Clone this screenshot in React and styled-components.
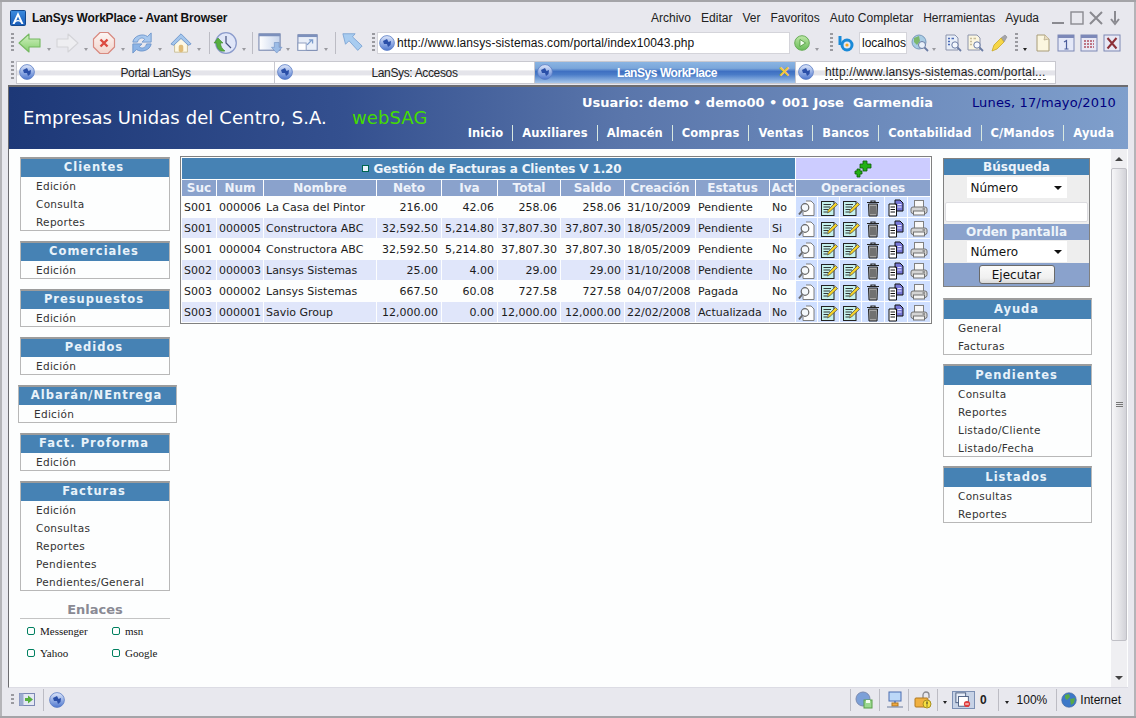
import React from "react";
import styled, { createGlobalStyle } from "styled-components";

const Global = createGlobalStyle`
  html, body { margin: 0; padding: 0; height: 100%; overflow: hidden; }
  #root { height: 100%; }
`;

const Win = styled.div`
  width: 1136px;
  height: 718px;
  box-sizing: border-box;
  display: flex;
  flex-direction: column;
  background: #e8e8ee;
  border-top: 2px solid #a4a4a8;
  border-bottom: 2px solid #a4a4a8;
  box-shadow: inset 2px 0 #b4b4b8, inset -2px 0 #b4b4b8;
  font-family: "Liberation Sans", Arial, sans-serif;
  font-size: 12px;
  color: #111;
`;

const TitleBar = styled.div`
  height: 28px;
  flex: none;
  display: flex;
  align-items: center;
  padding: 3px 13px 0 10px;
  box-sizing: border-box;
`;

const AppLogo = styled.span`
  width: 16px;
  height: 16px;
  margin-right: 6px;
  display: block;
`;

const AppTitle = styled.span`
  font-weight: bold;
  font-size: 12px;
  letter-spacing: -0.2px;
  flex: 1;
  color: #111;
`;

const Menu = styled.nav`
  display: flex;
  gap: 10px;
  margin-right: 11px;
  color: #222;
`;

const WinButtons = styled.div`
  display: flex;
  align-items: center;
  gap: 3px;
`;

const ToolBar = styled.div`
  height: 25px;
  flex: none;
  display: flex;
  align-items: center;
  padding-left: 11px;
`;

const Grip = styled.span`
  width: 3px;
  height: ${(p) => p.$h || 20}px;
  margin: 0 ${(p) => p.$r ?? 4}px 0 ${(p) => p.$l ?? 0}px;
  flex: none;
  background: repeating-linear-gradient(#9a9aa0 0 2px, transparent 2px 4px);
`;

const Sep = styled.span`
  width: 1px;
  height: 22px;
  flex: none;
  margin: 0 ${(p) => p.$r ?? 3}px 0 ${(p) => p.$l ?? 5}px;
  background: #bcbcc4;
`;

const Drop = styled.span`
  width: 0;
  height: 0;
  flex: none;
  align-self: flex-end;
  margin: 0 ${(p) => p.$r ?? 4}px ${(p) => p.$b ?? 4}px ${(p) => p.$l ?? 5}px;
  border-left: 2.5px solid transparent;
  border-right: 2.5px solid transparent;
  border-top: 3px solid ${(p) => (p.$dark ? "#222" : "#9a9aa0")};
`;

const Tool = styled.span`
  display: block;
  flex: none;
  width: ${(p) => p.$s || 24}px;
  height: ${(p) => p.$s || 24}px;
  margin-right: ${(p) => p.$r || 0}px;
  & > svg { display: block; width: 100%; height: 100%; }
`;

const AddressBox = styled.div`
  width: 413px;
  height: 22px;
  flex: none;
  box-sizing: border-box;
  background: #fff;
  border: 1px solid #d4d4da;
  display: flex;
  align-items: center;
  gap: 2px;
  padding-left: 1px;
  font-size: 12px;
  letter-spacing: 0.1px;
  margin-right: 4px;
`;

const SearchBox = styled.div`
  width: 48px;
  height: 22px;
  flex: none;
  box-sizing: border-box;
  background: #fff;
  border: 1px solid #d4d4da;
  display: flex;
  align-items: center;
  padding-left: 2px;
  margin: 0 4px 0 4px;
  overflow: hidden;
`;

const TabStrip = styled.div`
  height: 30px;
  flex: none;
  display: flex;
  align-items: flex-start;
  padding: 6px 0 0 11px;
  box-sizing: border-box;
`;

const Tabs = styled.div`
  display: flex;
  border: 1px solid #c8c8cf;
`;

const Tab = styled.div`
  position: relative;
  width: ${(p) => p.$w || 260}px;
  height: 21px;
  box-sizing: border-box;
  display: flex;
  align-items: center;
  justify-content: ${(p) => (p.$left ? "flex-start" : "center")};
  padding-left: ${(p) => (p.$left ? 0 : 20)}px;
  padding-right: ${(p) => (p.$active ? 16 : 0)}px;
  border-right: 1px solid #c8c8cf;
  color: ${(p) => (p.$active ? "#fff" : "#222")};
  font-weight: ${(p) => (p.$active ? "bold" : "normal")};
  letter-spacing: ${(p) => (p.$active ? "-0.45px" : p.$left ? "0.18px" : "-0.35px")};
  background: ${(p) =>
    p.$active
      ? "linear-gradient(#8ab4e2 0%, #7aa6da 30%, #3f70c2 45%, #4a7cc8 60%, #a6c6ea 100%)"
      : "linear-gradient(#fff 0%, #fff 38%, #e4e4ea 42%, #e4e4ea 62%, #fff 66%, #fff 100%)"};
  &:last-child { border-right: 0; }
`;

const TabGlobe = styled.span`
  position: absolute;
  left: 2px;
  top: 2px;
  width: 16px;
  height: 16px;
`;

const TabClose = styled.span`
  position: absolute;
  right: 4px;
  top: 1px;
  color: #f4c83c;
  font-size: 15px;
  font-weight: bold;
  line-height: 18px;
`;

const DashedText = styled.span`
  margin-left: 29px;
  border-bottom: 1px dashed #555;
  line-height: 14px;
`;

const Viewport = styled.div`
  flex: 1;
  min-height: 0;
  margin: 0 8px;
  display: flex;
  flex-direction: column;
  background: #fdfefe;
  border-top: 2px solid #6c6c70;
  border-left: 1px solid #6c6c70;
  border-bottom: 1px solid #dcdce4;
  font-family: "DejaVu Sans", Verdana, sans-serif;
`;

const Banner = styled.header`
  height: 62px;
  flex: none;
  box-sizing: border-box;
  display: flex;
  justify-content: space-between;
  padding: 0 1px 0 14px;
  color: #fff;
  background: linear-gradient(90deg, #1d3877 0%, #34508f 30%, #5a76ab 55%, #7f9fcc 100%);
`;

const Company = styled.div`
  align-self: flex-start;
  margin-top: 20px;
  font-size: 18px;
  letter-spacing: 0.1px;
  line-height: 22px;
  white-space: nowrap;
`;

const Product = styled.span`
  color: #44dd00;
  margin-left: 25px;
`;

const BannerSide = styled.div`
  display: flex;
  flex-direction: column;
  align-items: flex-end;
`;

const UserRow = styled.div`
  display: flex;
  align-items: baseline;
  margin: 8px 11px 0 0;
  height: 18px;
  white-space: nowrap;
`;

const UserName = styled.span`
  font-weight: bold;
  font-size: 13px;
`;

const DateText = styled.span`
  font-size: 13px;
  letter-spacing: 0.15px;
  color: #00007f;
  margin-left: 39px;
`;

const Nav = styled.nav`
  display: flex;
  margin: 12px 13px 0 0;
  font-size: 11.5px;
  font-weight: bold;
  letter-spacing: 0.1px;
  white-space: nowrap;
`;

const NavItem = styled.a`
  padding: 0 9px;
  line-height: 16px;
  border-left: 1px solid #d8e8e0;
  &:first-child { border-left: 0; }
  &:last-child { padding-right: 0; }
`;

const Body = styled.div`
  flex: 1;
  min-height: 0;
  display: flex;
`;

const Main = styled.main`
  flex: 1;
  min-width: 0;
  display: flex;
  align-items: flex-start;
  padding: 8px 0 0 11px;
`;

const Side = styled.aside`
  width: ${(p) => p.$w}px;
  flex: none;
  display: flex;
  flex-direction: column;
  gap: ${(p) => p.$gap}px;
`;

const Box = styled.section`
  box-sizing: border-box;
  border: 1px solid #b8b8b8;
  border-top: 2px solid #9c9c9c;
  margin: 0 ${(p) => (p.$wide ? "-7px" : 0)} 0 ${(p) => (p.$wide ? "-2px" : 0)};
`;

const BoxHead = styled.h3`
  margin: 0;
  height: ${(p) => (p.$tall ? 19 : 18)}px;
  padding-right: 2px;
  background: #4682b4;
  color: #e8f2fa;
  font-size: 11.5px;
  line-height: ${(p) => (p.$tall ? 18 : 17)}px;
  font-weight: bold;
  letter-spacing: 1px;
  text-align: center;
`;

const BoxItem = styled.div`
  height: 18px;
  line-height: 18px;
  padding-left: ${(p) => (p.$tall ? 14 : 15)}px;
  font-size: 10.5px;
  letter-spacing: 0.3px;
  color: #333;
  &:last-child { height: 17px; }
`;

const LinksBlock = styled.div`
  margin-top: 1px;
`;

const LinksHead = styled.div`
  text-align: center;
  font-weight: bold;
  font-size: 13px;
  color: #8a8a94;
  line-height: 16px;
  border-bottom: 1px solid #c4c4c4;
`;

const Links = styled.div`
  display: grid;
  grid-template-columns: 85px 1fr;
  grid-auto-rows: 22px;
  padding: 1px 0 0 7px;
`;

const LinkItem = styled.div`
  display: flex;
  align-items: center;
  gap: 5px;
  font-family: "Liberation Serif", "Times New Roman", serif;
  font-size: 11px;
  color: #141414;
`;

const LinkDot = styled.i`
  width: 6px;
  height: 6px;
  border: 1px solid #008060;
  border-radius: 2px;
`;

const TableWrap = styled.div`
  width: 752px;
  flex: none;
  margin: -1px 11px 0 10px;
  box-sizing: border-box;
  border: 1px solid #808080;
`;

const Grid = styled.table`
  width: 750px;
  table-layout: fixed;
  border-collapse: separate;
  border-spacing: 1px;
  margin: 0;
  font-size: 11px;
  color: #1c1c1c;
`;

const TitleCell = styled.td`
  height: 21px;
  padding: 0 0 0 6px;
  background: #4682b4;
  color: #eef4fa;
  font-weight: bold;
  font-size: 12px;
  letter-spacing: -0.15px;
  text-align: center;
`;

const TitleDot = styled.i`
  display: inline-block;
  width: 5px;
  height: 5px;
  border: 1px solid #006650;
  background: #e8f2fa;
  margin-right: 5px;
  vertical-align: 1px;
`;

const AddCell = styled.td`
  padding: 0;
  background: #ccccff;
  text-align: center;
  line-height: 0;
`;

const Th = styled.th`
  height: 16px;
  padding: 0;
  background: #8aa2cc;
  color: #eef2fa;
  font-size: 12px;
  font-weight: bold;
  text-align: center;
  overflow: hidden;
  white-space: nowrap;
`;

const Td = styled.td`
  height: 20px;
  padding: 0 3px 0 2px;
  background: ${(p) => (p.$alt ? "#e0e6fa" : "#fdfefe")};
  text-align: ${(p) => (p.$num ? "right" : "left")};
  white-space: nowrap;
  overflow: hidden;
`;

const OpCell = styled.td`
  padding: 0;
  height: 20px;
  background: #cfdfff;
  text-align: center;
  line-height: 0;
  & > svg { width: 18px; height: 18px; margin-top: 2px; }
`;

const SearchPanel = styled.form`
  box-sizing: border-box;
  width: 147px;
  margin: 1px 0 2px 0;
  border: 1px solid #808080;
  display: flex;
  flex-direction: column;
  background: #eee;
`;

const PanelHead = styled.div`
  height: 16px;
  line-height: 16px;
  background: ${(p) => (p.$alt ? "#8aa2cc" : "#4682b4")};
  color: #eef4fa;
  font-size: 12px;
  font-weight: bold;
  text-align: center;
`;

const PanelRow = styled.div`
  height: ${(p) => p.$h}px;
  display: flex;
  justify-content: center;
  align-items: center;
  background: ${(p) => p.$bg || "#eee"};
`;

const FakeSelect = styled.div`
  width: 100px;
  height: 21px;
  box-sizing: border-box;
  background: #fff;
  display: flex;
  align-items: center;
  justify-content: space-between;
  padding: 0 4px;
  font-size: 12px;
  color: #111;
  &::after {
    content: "";
    border-left: 4px solid transparent;
    border-right: 4px solid transparent;
    border-top: 4px solid #111;
    margin-right: 1px;
  }
`;

const TextInput = styled.input`
  width: 143px;
  height: 20px;
  box-sizing: border-box;
  border: 1px solid #dcdce0;
  border-radius: 2px;
  background: #fff;
  padding: 0;
  margin: 0;
`;

const Btn = styled.button`
  width: 76px;
  height: 19px;
  padding: 0;
  border: 1px solid #6a6a6a;
  border-radius: 3px;
  background: linear-gradient(#fafafa, #f0f0f0 70%, #d8d8d8);
  font-family: "DejaVu Sans", Verdana, sans-serif;
  font-size: 12px;
  color: #111;
`;

const Scroll = styled.div`
  width: 16px;
  flex: none;
  margin-right: 1px;
  display: flex;
  flex-direction: column;
  align-items: stretch;
  background: #efeff2;
`;

const ScrollArrow = styled.div`
  height: 19px;
  flex: none;
  display: flex;
  justify-content: center;
  align-items: center;
  &::after {
    content: "";
    border-left: 4px solid transparent;
    border-right: 4px solid transparent;
    border-${(p) => (p.$up ? "bottom" : "top")}: 4px solid #444;
  }
`;

const ScrollThumb = styled.div`
  height: 473px;
  flex: none;
  box-sizing: border-box;
  background: linear-gradient(90deg, #f6f6f8, #e2e2e6 60%, #d2d2d8);
  border: 1px solid #c0c0c6;
  border-radius: 2px;
  display: flex;
  align-items: center;
  justify-content: center;
  &::after {
    content: "";
    width: 7px;
    height: 5px;
    background: repeating-linear-gradient(#777 0 1px, transparent 1px 2px);
  }
`;

const ScrollGap = styled.div`
  flex: 1;
`;

const Status = styled.footer`
  height: 28px;
  flex: none;
  box-sizing: border-box;
  display: flex;
  align-items: center;
  padding: 0 15px 5px 11px;
  color: #111;
`;

const Spacer = styled.div`
  flex: 1;
`;

const ZeroCount = styled.b`
  margin: 0 11px 0 5px;
  color: #222;
`;

const ActiveTool = styled.span`
  width: 23px;
  height: 18px;
  box-sizing: border-box;
  display: block;
  background: #c6d2e6;
  border: 1px solid #7c90b4;
  padding: 0 2px;
  & > svg { display: block; width: 16px; height: 16px; }
`;

const Grad = ({ id, from, to, dir = "v" }) => (
  <linearGradient id={id} x1="0" y1="0" x2={dir === "v" ? "0" : "1"} y2={dir === "v" ? "1" : "0"}>
    <stop offset="0" stopColor={from} />
    <stop offset="1" stopColor={to} />
  </linearGradient>
);

const Logo = () => (
  <svg viewBox="0 0 16 16">
    <defs><Grad id="lg" from="#3c8ce0" to="#1a5cb8" /></defs>
    <rect x=".5" y=".5" width="15" height="15" rx="1" fill="url(#lg)" stroke="#14488c" />
    <path d="M8 2 L13.5 14 H11.4 L8 6.4 L4.6 14 H2.5 Z" fill="#fff" />
    <path d="M4.5 13 Q8 9.5 11.5 13 L11 11 Q8 9 5 11 Z" fill="#fff" />
  </svg>
);

const Globe = () => (
  <svg viewBox="0 0 16 16">
    <defs><Grad id="gl" from="#dfe8fb" to="#4f78cf" /></defs>
    <circle cx="8" cy="8" r="7.4" fill="url(#gl)" stroke="#5a7cc4" strokeWidth=".8" />
    <path d="M4 6 L8 4 L9.5 7 L12 6 L11.5 10 L9 12 L8 9 L5 9 Z" fill="#2a4fa8" />
  </svg>
);

const Back = () => (
  <svg viewBox="0 0 24 24">
    <defs><Grad id="bk" from="#d4f2c4" to="#84cf6c" /></defs>
    <path d="M1 12 L11 3 V8 H22 V16 H11 V21 Z" fill="url(#bk)" stroke="#74b860" strokeWidth="1.1" strokeLinejoin="round" />
  </svg>
);

const Forward = () => (
  <svg viewBox="0 0 24 24">
    <path d="M23 12 L13 3 V8 H2 V16 H13 V21 Z" fill="#eeeef1" stroke="#d4d4d8" strokeWidth="1.1" strokeLinejoin="round" />
  </svg>
);

const Stop = () => (
  <svg viewBox="0 0 24 24">
    <defs><Grad id="st" from="#fdf6f4" to="#f2d4cc" /></defs>
    <path d="M8 1.5 H16 L22.5 8 V16 L16 22.5 H8 L1.5 16 V8 Z" fill="url(#st)" stroke="#d88a80" strokeWidth="1.2" strokeLinejoin="round" />
    <path d="M8.5 8.5 L15.5 15.5 M15.5 8.5 L8.5 15.5" stroke="#dc4a40" strokeWidth="2.4" />
  </svg>
);

const Refresh = () => (
  <svg viewBox="0 0 24 24">
    <path d="M2 11 C3 4 13 1 18 5 L22 1 V11 H12 L15 8 C12 5 8 7 7 11 Z" fill="#a8c8ee" stroke="#6f96cc" />
    <path d="M22 13 C21 20 11 23 6 19 L2 23 V13 H12 L9 16 C12 19 16 17 17 13 Z" fill="#8cb4e6" stroke="#6f96cc" />
  </svg>
);

const Home = () => (
  <svg viewBox="0 0 24 24">
    <path d="M5 11 L12 5 L19 11 V22 H5 Z" fill="#fdf8e4" stroke="#c8bc94" />
    <rect x="9.5" y="14" width="5" height="8" rx="2" fill="#e0bc78" />
    <path d="M1 13 L12 2 L23 13 L20 14.5 L12 7 L4 14.5 Z" fill="#a4c6ec" stroke="#6f96cc" strokeLinejoin="round" />
  </svg>
);

const History = () => (
  <svg viewBox="0 0 24 24">
    <circle cx="13" cy="12" r="10.3" fill="#e0e6f8" stroke="#8c9ccc" strokeWidth="1.3" />
    <path d="M13 5 V12 L18 17" fill="none" stroke="#44507c" strokeWidth="1.2" />
    <path d="M1 12 L5 7 L10 12 H7.5 C7.5 15 9 18 12 20 C6 21 3.5 17 3.5 12 Z" fill="#58b040" stroke="#3c8a2c" strokeWidth=".6" />
  </svg>
);

const WinDown = () => (
  <svg viewBox="0 0 26 24">
    <defs><Grad id="wd" from="#fff" to="#c6d4ec" dir="h" /></defs>
    <rect x="1" y="3" width="22" height="17" fill="url(#wd)" stroke="#6a7ca8" />
    <rect x="1" y="3" width="22" height="2.5" fill="#7c90bc" />
    <path d="M17 12 H22 V17 H25 L19.5 23 L14 17 H17 Z" fill="#9cbce6" stroke="#6a8cc0" strokeWidth=".6" />
  </svg>
);

const WinUp = () => (
  <svg viewBox="0 0 24 24">
    <rect x="1" y="3" width="21" height="17" fill="#e8eef8" stroke="#6a7ca8" />
    <rect x="1" y="3" width="21" height="2.5" fill="#7c90bc" />
    <rect x="1" y="12" width="9" height="8" fill="#fff" stroke="#8a9abc" />
    <path d="M11 14 L16 9 M13 8.5 H17 V12.5" fill="none" stroke="#7c9ccc" strokeWidth="1.4" />
  </svg>
);

const Cursor = () => (
  <svg viewBox="0 0 24 24">
    <path d="M1 2 H15 L12 5.5 L23 16 L18 21 L8 10 L4 14 Z" fill="#a8ccf0" stroke="#7ca4d4" strokeLinejoin="round" />
  </svg>
);

const Go = () => (
  <svg viewBox="0 0 16 16">
    <defs><Grad id="go" from="#bfe8a8" to="#68bc58" /></defs>
    <circle cx="8" cy="8" r="7.3" fill="url(#go)" stroke="#68ac58" />
    <path d="M6 4.5 L11.5 8 L6 11.5 Z" fill="#f4fff0" stroke="#3c8a2c" strokeWidth=".7" />
  </svg>
);

const Bing = () => (
  <svg viewBox="0 0 18 18">
    <circle cx="10" cy="11" r="5" fill="none" stroke="#1a8ad8" strokeWidth="3" />
    <path d="M3 2 V11" stroke="#1a8ad8" strokeWidth="3" />
    <circle cx="10" cy="11" r="1.6" fill="#f4a820" />
  </svg>
);

const GlobeLens = () => (
  <svg viewBox="0 0 18 18">
    <circle cx="8" cy="8" r="7" fill="#a8cce4" stroke="#7a9abc" />
    <path d="M3 4 L8 2 L9 7 L6 11 L3 8 Z" fill="#7cb86c" />
    <circle cx="11" cy="11" r="3.5" fill="#e8f0fa" stroke="#6a7ca4" />
    <path d="M13.5 13.5 L17 17" stroke="#6a7ca4" strokeWidth="1.8" />
  </svg>
);

const PageLens = ({ tone = "#e8eef8", ink = "#4c6cb8" }) => (
  <svg viewBox="0 0 18 18">
    <path d="M2 1 H11 L14 4 V16 H2 Z" fill={tone} stroke="#8c94ac" />
    <path d="M4 4.5 H6 M4 7.5 H6 M4 10.5 H6 M7.5 4.5 H10" stroke={ink} strokeWidth="1.3" />
    <circle cx="11" cy="11" r="3.2" fill="#f4f8fe" stroke="#6a7ca4" />
    <path d="M13.5 13.5 L17 17" stroke="#6a7ca4" strokeWidth="1.8" />
  </svg>
);

const Marker = () => (
  <svg viewBox="0 0 18 18">
    <path d="M11 4 L15 1 L17 3 L14 8 Z" fill="#a4a4a8" stroke="#8a8a90" strokeWidth=".6" />
    <path d="M11 4 L14 8 L7 15 L2 17 L4 11 Z" fill="#f6d648" stroke="#c8a828" strokeWidth=".8" />
  </svg>
);

const PageBlank = () => (
  <svg viewBox="0 0 18 18">
    <path d="M3 1 H11 L15 5 V17 H3 Z" fill="#fbf6e0" stroke="#a89c78" />
    <path d="M11 1 L10 6 L15 5" fill="#e8dcc0" stroke="#a89c78" strokeWidth=".6" />
  </svg>
);

const One = () => (
  <svg viewBox="0 0 18 18">
    <rect x="1" y="1" width="16" height="16" fill="#e4e8f8" stroke="#7c88b4" />
    <rect x="1" y="1" width="16" height="3" fill="#7c88b8" />
    <path d="M7 8 L9.5 6.5 V15 M7.5 15 H11.5" fill="none" stroke="#4a5c9c" strokeWidth="1.2" />
  </svg>
);

const Tile = () => (
  <svg viewBox="0 0 18 18">
    <rect x="1" y="1" width="16" height="16" fill="#e8e8f4" stroke="#7c88b4" />
    <rect x="1" y="1" width="16" height="3" fill="#7c88b8" />
    <path d="M4 7 H14 M4 10 H14 M4 13 H14" stroke="#b05060" strokeWidth="1.6" strokeDasharray="2 1" />
  </svg>
);

const CloseAll = () => (
  <svg viewBox="0 0 18 18">
    <rect x="1" y="1" width="16" height="16" fill="#e8e8f4" stroke="#7c88b4" />
    <path d="M4.5 4 L13.5 14.5 M13.5 4 L4.5 14.5" stroke="#8c3038" strokeWidth="2" />
  </svg>
);

const Minus = () => (
  <svg viewBox="0 0 16 16" width="16" height="16"><path d="M2 13 H14" stroke="#8a8a90" strokeWidth="2" /></svg>
);
const Square = () => (
  <svg viewBox="0 0 16 16" width="16" height="16"><rect x="2" y="2" width="12" height="12" fill="none" stroke="#8a8a90" strokeWidth="1.4" /></svg>
);
const Cross = () => (
  <svg viewBox="0 0 16 16" width="16" height="16"><path d="M2 2 L14 14 M14 2 L2 14" stroke="#8a8a90" strokeWidth="2" /></svg>
);
const DownArrow = () => (
  <svg viewBox="0 0 16 16" width="16" height="16"><path d="M8 1 V12 M4 9 L8 14 L12 9" fill="none" stroke="#8a8a90" strokeWidth="2" /></svg>
);

const OpView = () => (
  <svg viewBox="0 0 18 18">
    <path d="M8 2 H13 L16 5 V16.5 H5 V13" fill="#fdfdfd" stroke="#707070" strokeWidth=".9" />
    <circle cx="7" cy="8.5" r="3.8" fill="#f4f8fc" stroke="#666" strokeWidth="1.2" />
    <path d="M4.2 11.5 L1 15.5" stroke="#666" strokeWidth="2" />
  </svg>
);

const OpEdit = () => (
  <svg viewBox="0 0 18 18">
    <rect x="1.5" y="2.5" width="12.5" height="14" fill="#c4f0ec" stroke="#222" />
    <path d="M3.5 5.5 H11 M3.5 8 H10 M3.5 10.5 H8 M3.5 13 H7" stroke="#222" strokeWidth=".9" />
    <path d="M15.5 3.5 L17.5 5.5 L10 12.5 L7.5 14 L8 11 Z" fill="#f6d428" stroke="#444" strokeWidth=".7" />
  </svg>
);

const OpTrash = () => (
  <svg viewBox="0 0 18 18">
    <path d="M3 3.5 H15 M7 3.5 V2 H11 V3.5" fill="none" stroke="#222" strokeWidth="1.2" />
    <path d="M4.5 5 H13.5 L13 17 H5 Z" fill="#a4a4a4" stroke="#222" />
    <path d="M7 7 V15 M9 7 V15 M11 7 V15" stroke="#333" strokeWidth=".9" />
  </svg>
);

const OpCopy = () => (
  <svg viewBox="0 0 18 18">
    <path d="M2 5 H9.5 V17 H2 Z" fill="#fff" stroke="#111" />
    <path d="M3.5 8 H8 M3.5 10.5 H8 M3.5 13 H8" stroke="#111" />
    <path d="M8 1 H13 L16 4 V12 H9.5 V5 H8 Z" fill="#7878d8" stroke="#111" />
    <path d="M10.5 5.5 H14.5 M10.5 8 H14.5" stroke="#e8e8ff" />
  </svg>
);

const OpPrint = () => (
  <svg viewBox="0 0 18 18">
    <rect x="4.5" y="1.5" width="9" height="8" fill="#f8f8f8" stroke="#808080" />
    <rect x="1" y="8" width="16" height="6.5" rx="2" fill="#d4d4d4" stroke="#707070" />
    <rect x="3.5" y="12" width="11" height="4" fill="#f4f4f4" stroke="#707070" />
    <path d="M12.5 10 H15" stroke="#555" />
  </svg>
);

const AddIcon = () => (
  <svg viewBox="0 0 18 18" width="18" height="18">
    <path d="M9 1 H13 V4 H17 V8 H13 V11 H9 V8 H6 V4 H9 Z" fill="#22b014" stroke="#0c5c08" strokeWidth=".8" />
    <path d="M3 9 H6 V11 H8 V14 H6 V17 H3 V14 H1 V11 H3 Z" fill="#22b014" stroke="#0c5c08" strokeWidth=".8" />
  </svg>
);

const PanelGo = () => (
  <svg viewBox="0 0 16 13" width="16" height="13">
    <rect x=".5" y=".5" width="15" height="12" fill="#e4e8f4" stroke="#7c88b4" />
    <rect x=".5" y=".5" width="4" height="12" fill="#9cacd0" />
    <path d="M6 5 H9 V2.5 L14 6.5 L9 10.5 V8 H6 Z" fill="#58b040" />
  </svg>
);

const GlobeSave = () => (
  <svg viewBox="0 0 18 18">
    <circle cx="8" cy="8" r="7" fill="#7ca0d8" stroke="#7a8ab0" />
    <rect x="9" y="9" width="8" height="8" fill="#9cd890" stroke="#58a048" />
    <rect x="11" y="9" width="4" height="3" fill="#f4fff0" />
  </svg>
);

const Computer = () => (
  <svg viewBox="0 0 18 18">
    <rect x="3" y="1" width="12" height="9" fill="#bcd8f8" stroke="#4a6cb0" />
    <path d="M9 10 V14" stroke="#4a6cb0" strokeWidth="1.4" />
    <rect x="6" y="12" width="6" height="3" fill="#f0a840" stroke="#b07820" />
    <path d="M1 16 H17" stroke="#6c7c9c" />
  </svg>
);

const Lock = () => (
  <svg viewBox="0 0 18 18">
    <path d="M9 7 V4 a3 3 0 0 1 6 0 V7" fill="none" stroke="#8a8a90" strokeWidth="1.3" />
    <rect x="1" y="7" width="13" height="9" rx="1" fill="#f0b040" stroke="#b07820" />
    <circle cx="13" cy="13" r="4" fill="#f8e040" stroke="#a89020" />
    <path d="M13 10.5 V13.5 M13 14.5 V15.5" stroke="#222" />
  </svg>
);

const Popups = () => (
  <svg viewBox="0 0 18 18">
    <rect x="1" y="1" width="11" height="11" fill="#e8eef8" stroke="#44587c" />
    <rect x="4" y="5" width="11" height="11" fill="#fff" stroke="#44587c" />
    <circle cx="13.5" cy="13.5" r="3.5" fill="#e03c3c" />
    <path d="M11.5 13.5 H15.5" stroke="#fff" strokeWidth="1.2" />
  </svg>
);

const Earth = () => (
  <svg viewBox="0 0 16 16">
    <circle cx="8" cy="8" r="7.3" fill="#3c78c8" stroke="#44689c" strokeWidth=".6" />
    <path d="M4 3 L8 2 L9 5 L6 8 L4 6 Z M9 7 L14 6 L13 11 L10 13 Z" fill="#58a848" />
  </svg>
);

const menu = ["Archivo", "Editar", "Ver", "Favoritos", "Auto Completar", "Herramientas", "Ayuda"];
const nav = ["Inicio", "Auxiliares", "Almacén", "Compras", "Ventas", "Bancos", "Contabilidad", "C/Mandos", "Ayuda"];
const widths = [34, 46, 112, 64, 55, 62, 63, 70, 73, 25, 21, 21, 21, 22, 22, 22];

const heads = ["Suc", "Num", "Nombre", "Neto", "Iva", "Total", "Saldo", "Creación", "Estatus", "Act"];

const rows = [
  ["S001", "000006", "La Casa del Pintor", "216.00", "42.06", "258.06", "258.06", "31/10/2009", "Pendiente", "No"],
  ["S001", "000005", "Constructora ABC", "32,592.50", "5,214.80", "37,807.30", "37,807.30", "18/05/2009", "Pendiente", "Si"],
  ["S001", "000004", "Constructora ABC", "32,592.50", "5,214.80", "37,807.30", "37,807.30", "18/05/2009", "Pendiente", "No"],
  ["S002", "000003", "Lansys Sistemas", "25.00", "4.00", "29.00", "29.00", "31/10/2008", "Pendiente", "No"],
  ["S003", "000002", "Lansys Sistemas", "667.50", "60.08", "727.58", "727.58", "04/07/2008", "Pagada", "No"],
  ["S003", "000001", "Savio Group", "12,000.00", "0.00", "12,000.00", "12,000.00", "22/02/2008", "Actualizada", "No"],
];

const leftBoxes = [
  { title: "Clientes", items: ["Edición", "Consulta", "Reportes"] },
  { title: "Comerciales", items: ["Edición"] },
  { title: "Presupuestos", items: ["Edición"] },
  { title: "Pedidos", items: ["Edición"] },
  { title: "Albarán/NEntrega", items: ["Edición"], wide: true },
  { title: "Fact. Proforma", items: ["Edición"] },
  { title: "Facturas", items: ["Edición", "Consultas", "Reportes", "Pendientes", "Pendientes/General"] },
];

const rightBoxes = [
  { title: "Ayuda", items: ["General", "Facturas"] },
  { title: "Pendientes", items: ["Consulta", "Reportes", "Listado/Cliente", "Listado/Fecha"] },
  { title: "Listados", items: ["Consultas", "Reportes"] },
];

const MenuBox = ({ title, items, wide, tall }) => (
  <Box $wide={wide}>
    <BoxHead $tall={tall}>{title}</BoxHead>
    {items.map((it) => (
      <BoxItem key={it} $tall={tall}>{it}</BoxItem>
    ))}
  </Box>
);

export default function App() {
  return (
    <Win>
      <Global />
      <TitleBar>
        <AppLogo><Logo /></AppLogo>
        <AppTitle>LanSys WorkPlace - Avant Browser</AppTitle>
        <Menu>{menu.map((m) => <span key={m}>{m}</span>)}</Menu>
        <WinButtons><Minus /><Square /><Cross /><DownArrow /></WinButtons>
      </TitleBar>

      <ToolBar>
        <Grip />
        <Tool><Back /></Tool><Drop />
        <Tool><Forward /></Tool><Drop />
        <Tool><Stop /></Tool><Drop $r={6} />
        <Tool $s={22}><Refresh /></Tool><Drop $r={8} />
        <Tool $s={22}><Home /></Tool><Drop />
        <Sep $l={4} $r={3} />
        <Tool><History /></Tool><Drop />
        <Sep $l={2} $r={5} />
        <Tool $s={25}><WinDown /></Tool><Drop $l={3} $r={7} />
        <Tool $s={22}><WinUp /></Tool><Drop />
        <Sep $l={3} $r={6} />
        <Tool $s={21}><Cursor /></Tool>
        <Grip $l={9} $r={2} />
        <AddressBox>
          <Tool $s={16}><Globe /></Tool>
          http://www.lansys-sistemas.com/portal/index10043.php
        </AddressBox>
        <Tool $s={16}><Go /></Tool><Drop $r={6} />
        <Grip $l={5} $r={4} />
        <Tool $s={18}><Bing /></Tool>
        <SearchBox>localhos</SearchBox>
        <Tool $s={18}><GlobeLens /></Tool><Drop $l={3} $r={8} />
        <Tool $s={18} $r={4}><PageLens /></Tool>
        <Tool $s={18} $r={6}><PageLens tone="#fbf6e0" ink="#c8bc98" /></Tool>
        <Tool $s={18}><Marker /></Tool>
        <Grip $l={7} $r={5} />
        <Drop $dark $l={0} $r={7} />
        <Tool $s={18} $r={5}><PageBlank /></Tool>
        <Tool $s={18} $r={5}><One /></Tool>
        <Tool $s={18} $r={5}><Tile /></Tool>
        <Tool $s={18}><CloseAll /></Tool>
      </ToolBar>

      <TabStrip>
        <Grip $r={2} />
        <Tabs>
          <Tab $w={258}><TabGlobe><Globe /></TabGlobe>Portal LanSys</Tab>
          <Tab><TabGlobe><Globe /></TabGlobe>LanSys: Accesos</Tab>
          <Tab $w={261} $active><TabGlobe><Globe /></TabGlobe>LanSys WorkPlace<TabClose>✕</TabClose></Tab>
          <Tab $w={259} $left>
            <TabGlobe><Globe /></TabGlobe>
            <DashedText>http://www.lansys-sistemas.com/portal...</DashedText>
          </Tab>
        </Tabs>
      </TabStrip>

      <Viewport>
        <Banner>
          <Company>
            Empresas Unidas del Centro, S.A.<Product>webSAG</Product>
          </Company>
          <BannerSide>
            <UserRow>
              <UserName>Usuario: demo • demo00 • 001 Jose&nbsp; Garmendia</UserName>
              <DateText>Lunes, 17/mayo/2010</DateText>
            </UserRow>
            <Nav>{nav.map((n) => <NavItem key={n}>{n}</NavItem>)}</Nav>
          </BannerSide>
        </Banner>
        <Body>
          <Main>
            <Side $w={150} $gap={10}>
              {leftBoxes.map((b) => <MenuBox key={b.title} {...b} />)}
              <LinksBlock>
                <LinksHead>Enlaces</LinksHead>
                <Links>
                  {["Messenger", "msn", "Yahoo", "Google"].map((l) => (
                    <LinkItem key={l}><LinkDot />{l}</LinkItem>
                  ))}
                </Links>
              </LinksBlock>
            </Side>

            <TableWrap>
              <Grid>
                <colgroup>{widths.map((w, i) => <col key={i} style={{ width: w }} />)}</colgroup>
                <tbody>
                  <tr>
                    <TitleCell colSpan={10}><TitleDot />Gestión de Facturas a Clientes V 1.20</TitleCell>
                    <AddCell colSpan={6}><AddIcon /></AddCell>
                  </tr>
                  <tr>
                    {heads.map((h) => <Th key={h}>{h}</Th>)}
                    <Th colSpan={6}>Operaciones</Th>
                  </tr>
                  {rows.map((r, i) => (
                    <tr key={r[1]}>
                      {r.map((c, j) => (
                        <Td key={j} $alt={i % 2 === 1} $num={j >= 3 && j <= 6}>{c}</Td>
                      ))}
                      <OpCell><OpView /></OpCell>
                      <OpCell><OpEdit /></OpCell>
                      <OpCell><OpEdit /></OpCell>
                      <OpCell><OpTrash /></OpCell>
                      <OpCell><OpCopy /></OpCell>
                      <OpCell><OpPrint /></OpCell>
                    </tr>
                  ))}
                </tbody>
              </Grid>
            </TableWrap>

            <Side $w={149} $gap={9}>
              <SearchPanel>
                <PanelHead>Búsqueda</PanelHead>
                <PanelRow $h={25}><FakeSelect>Número</FakeSelect></PanelRow>
                <PanelRow $h={24}><TextInput /></PanelRow>
                <PanelHead $alt>Orden pantalla</PanelHead>
                <PanelRow $h={23}><FakeSelect>Número</FakeSelect></PanelRow>
                <PanelRow $h={23} $bg="#8aa2cc"><Btn type="button">Ejecutar</Btn></PanelRow>
              </SearchPanel>
              {rightBoxes.map((b) => <MenuBox key={b.title} {...b} tall />)}
            </Side>
          </Main>
          <Scroll>
            <ScrollArrow $up />
            <ScrollThumb />
            <ScrollGap />
            <ScrollArrow />
          </Scroll>
        </Body>
      </Viewport>

      <Status>
        <Grip $h={12} $r={5} />
        <PanelGo />
        <Sep $l={8} $r={5} />
        <Tool $s={16}><Globe /></Tool>
        <Spacer />
        <Sep $l={0} $r={4} />
        <Tool $s={18}><GlobeSave /></Tool>
        <Sep $l={6} $r={6} />
        <Tool $s={18}><Computer /></Tool>
        <Sep $l={4} $r={5} />
        <Tool $s={18}><Lock /></Tool>
        <Sep $l={5} $r={0} />
        <Drop $dark $b={7} $l={5} $r={5} />
        <ActiveTool><Popups /></ActiveTool>
        <ZeroCount>0</ZeroCount>
        <Sep $l={0} $r={0} />
        <Drop $dark $b={7} $l={6} $r={8} />
        100%
        <Sep $l={9} $r={4} />
        <Tool $s={16} $r={3}><Earth /></Tool>
        Internet
      </Status>
    </Win>
  );
}
